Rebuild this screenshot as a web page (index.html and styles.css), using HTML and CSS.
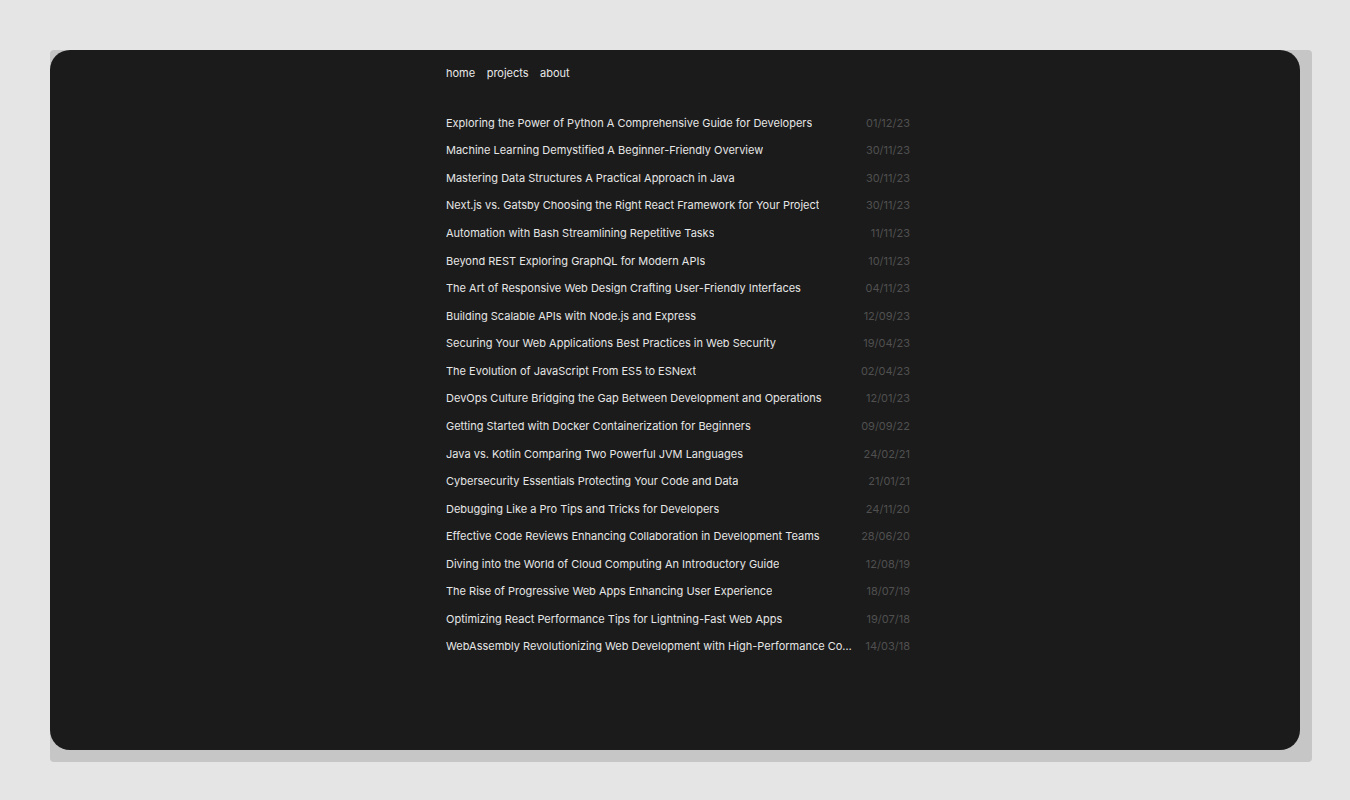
FILE: index.html
```html
<!DOCTYPE html>
<html>
<head>
<meta charset="utf-8">
<link rel="stylesheet" href="styles.css">
</head>
<body>
<div class="frame">
  <div class="card">
    <div class="content">
      <nav class="nav">
        <a href="#">home</a>
        <a href="#">projects</a>
        <a href="#">about</a>
      </nav>
      <ul class="posts">
        <li><span class="title">Exploring the Power of Python A Comprehensive Guide for Developers</span><span class="date">01/12/23</span></li>
        <li><span class="title">Machine Learning Demystified A Beginner-Friendly Overview</span><span class="date">30/11/23</span></li>
        <li><span class="title">Mastering Data Structures A Practical Approach in Java</span><span class="date">30/11/23</span></li>
        <li><span class="title">Next.js vs. Gatsby Choosing the Right React Framework for Your Project</span><span class="date">30/11/23</span></li>
        <li><span class="title">Automation with Bash Streamlining Repetitive Tasks</span><span class="date">11/11/23</span></li>
        <li><span class="title">Beyond REST Exploring GraphQL for Modern APIs</span><span class="date">10/11/23</span></li>
        <li><span class="title">The Art of Responsive Web Design Crafting User-Friendly Interfaces</span><span class="date">04/11/23</span></li>
        <li><span class="title">Building Scalable APIs with Node.js and Express</span><span class="date">12/09/23</span></li>
        <li><span class="title">Securing Your Web Applications Best Practices in Web Security</span><span class="date">19/04/23</span></li>
        <li><span class="title">The Evolution of JavaScript From ES5 to ESNext</span><span class="date">02/04/23</span></li>
        <li><span class="title">DevOps Culture Bridging the Gap Between Development and Operations</span><span class="date">12/01/23</span></li>
        <li><span class="title">Getting Started with Docker Containerization for Beginners</span><span class="date">09/09/22</span></li>
        <li><span class="title">Java vs. Kotlin Comparing Two Powerful JVM Languages</span><span class="date">24/02/21</span></li>
        <li><span class="title">Cybersecurity Essentials Protecting Your Code and Data</span><span class="date">21/01/21</span></li>
        <li><span class="title">Debugging Like a Pro Tips and Tricks for Developers</span><span class="date">24/11/20</span></li>
        <li><span class="title">Effective Code Reviews Enhancing Collaboration in Development Teams</span><span class="date">28/06/20</span></li>
        <li><span class="title">Diving into the World of Cloud Computing An Introductory Guide</span><span class="date">12/08/19</span></li>
        <li><span class="title">The Rise of Progressive Web Apps Enhancing User Experience</span><span class="date">18/07/19</span></li>
        <li><span class="title">Optimizing React Performance Tips for Lightning-Fast Web Apps</span><span class="date">19/07/18</span></li>
        <li><span class="title">WebAssembly Revolutionizing Web Development with High-Performance Computing</span><span class="date">14/03/18</span></li>
      </ul>
    </div>
  </div>
</div>
</body>
</html>
```

FILE: styles.css
```css
* { box-sizing: border-box; }
html, body { margin: 0; padding: 0; }
body {
  background: #e5e5e5;
  font-family: Inter, "Noto Sans", sans-serif;
  padding: 50px 38px 38px 50px;
}
.frame {
  width: 1262px;
  height: 712px;
  background: #c6c6c6;
  border-radius: 4px;
}
.card {
  width: 1250px;
  height: 700px;
  background: #1b1b1b;
  border-radius: 20px;
  padding-left: 396px;
}
.content {
  width: 464px;
}
.nav {
  display: flex;
  gap: 11.5px;
  padding-top: 14px;
  font-size: 11px;
  line-height: 18px;
}
.nav a {
  color: #e8e8e8;
  text-decoration: none;
}
.posts {
  list-style: none;
  margin: 27px 0 0 0;
  padding: 0;
}
.posts li {
  display: flex;
  justify-content: space-between;
  gap: 13px;
  font-size: 11px;
  line-height: 18px;
  padding: 4.79px 0;
}
.title {
  color: #e6e6e6;
  white-space: nowrap;
  overflow: hidden;
  text-overflow: ellipsis;
  min-width: 0;
}
.date {
  color: #505050;
  flex-shrink: 0;
}
```
